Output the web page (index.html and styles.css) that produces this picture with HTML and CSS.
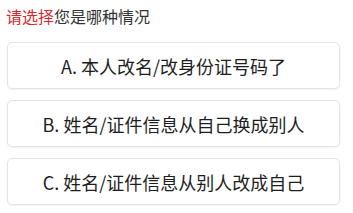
FILE: index.html
```html
<!DOCTYPE html>
<html lang="zh-CN">
<head>
    <meta charset="UTF-8">
    <meta name="viewport" content="width=device-width, initial-scale=1.0">
    <title>选择情况</title>
    <link rel="stylesheet" href="styles.css">
</head>
<body>

    <!-- 标题 -->
    <p class="question"><span class="hint">请选择</span>您是哪种情况</p>

    <!-- 选项 -->
    <div class="options">
        <div class="option">A. 本人改名/改身份证号码了</div>
        <div class="option">B. 姓名/证件信息从自己换成别人</div>
        <div class="option">C. 姓名/证件信息从别人改成自己</div>
        <div class="option"></div>
    </div>

</body>
</html>
```

FILE: styles.css
```css
body {
    margin: 0;
    background: #fff;
    font-family: "Noto Sans CJK SC", "Noto Sans", sans-serif;
    color: #222;
}

.question {
    margin: 0 0 16px;
    padding: 6px 6px 0;
    font-size: 16px;
    line-height: 20px;
    color: #333;
}

.hint {
    color: #d32a2f;
}

.options {
    display: flex;
    flex-direction: column;
    gap: 11px;
    padding: 0 13px 0 7px;
}

.option {
    height: 45px;
    display: flex;
    align-items: center;
    justify-content: center;
    border: 1px solid #e4e4e4;
    border-radius: 5px;
    box-shadow: 0 1px 2px rgba(0, 0, 0, 0.06);
    font-size: 18px;
    color: #1e1e1e;
}
```
